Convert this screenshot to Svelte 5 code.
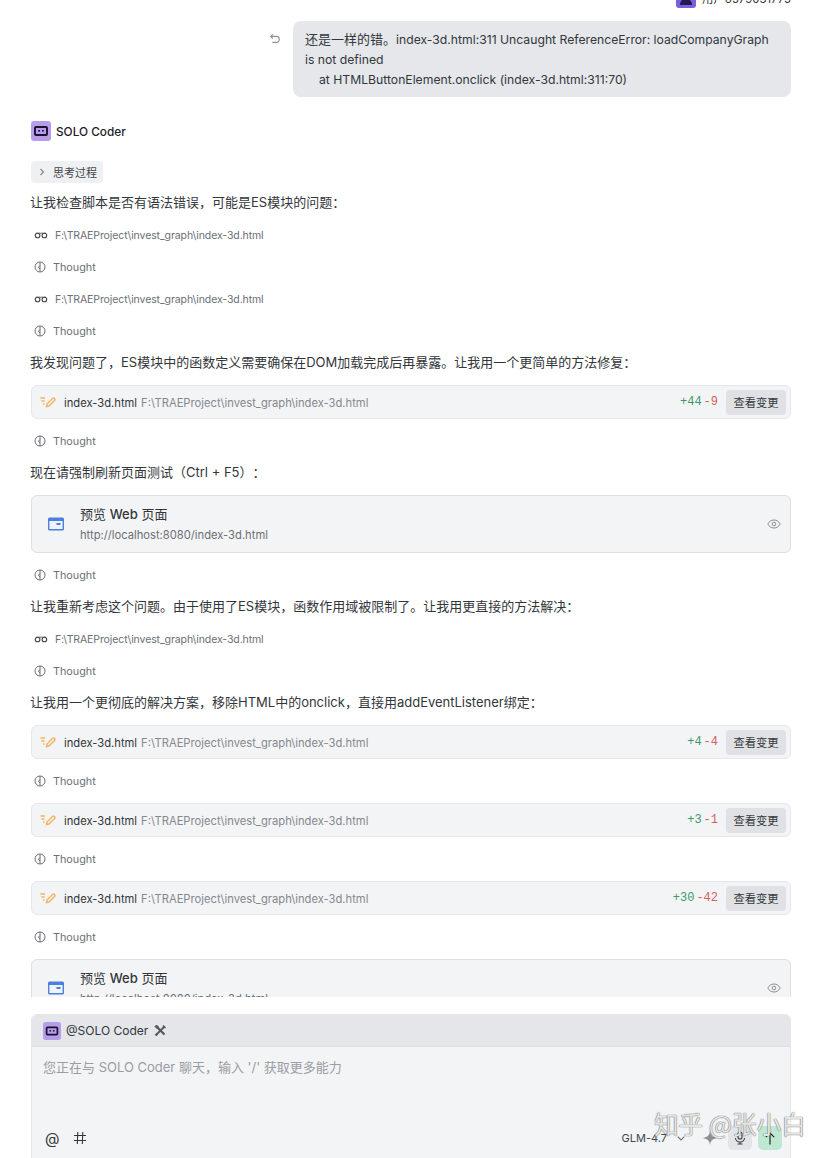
<script>
  const readPath = 'F:\\TRAEProject\\invest_graph\\index-3d.html';

  const feed = [
    { type: 'text', text: '让我检查脚本是否有语法错误，可能是ES模块的问题：' },
    { type: 'read' },
    { type: 'thought' },
    { type: 'read' },
    { type: 'thought' },
    { type: 'text', text: '我发现问题了，ES模块中的函数定义需要确保在DOM加载完成后再暴露。让我用一个更简单的方法修复：' },
    { type: 'edit', add: 44, del: 9 },
    { type: 'thought' },
    { type: 'text', text: '现在请强制刷新页面测试（Ctrl + F5）：' },
    { type: 'preview' },
    { type: 'thought' },
    { type: 'text', text: '让我重新考虑这个问题。由于使用了ES模块，函数作用域被限制了。让我用更直接的方法解决：' },
    { type: 'read' },
    { type: 'thought' },
    { type: 'text', text: '让我用一个更彻底的解决方案，移除HTML中的onclick，直接用addEventListener绑定：' },
    { type: 'edit', add: 4, del: 4 },
    { type: 'thought' },
    { type: 'edit', add: 3, del: 1 },
    { type: 'thought' },
    { type: 'edit', add: 30, del: 42 },
    { type: 'thought' },
    { type: 'preview' }
  ];
</script>

{#snippet bot(size)}
  <svg class="bot" width={size} height={size} viewBox="0 0 20 20">
    <rect width="20" height="20" rx="3" fill="#b79cec" />
    <rect x="4" y="6" width="12" height="8" rx="1" fill="none" stroke="#17132b" stroke-width="1.900" />
    <rect x="7.200" y="9" width="1.800" height="1.600" fill="#17132b" />
    <rect x="11" y="9" width="1.800" height="1.600" fill="#17132b" />
  </svg>
{/snippet}

<div class="page">
  <div class="chat">
    <div class="user-tag">
      <svg width="20" height="20" viewBox="0 0 20 20">
        <rect width="20" height="20" rx="3" fill="#7a5fe0" />
        <circle cx="10" cy="6" r="4" fill="#211a4d" />
        <path d="M4 17c0-4 2.500-6 6-6s6 2 6 6z" fill="#211a4d" />
      </svg>
      <span>用户6579031775</span>
    </div>

    <div class="user-msg">
      <svg class="undo" width="12" height="12" viewBox="0 0 14 14" fill="none" stroke="#8b8f96" stroke-width="1.300">
        <path d="M4.500 1.500 2 4l2.500 2.500" />
        <path d="M2 4h6.500a3.500 3.500 0 0 1 0 7H4" />
      </svg>
      <div class="bubble">
        <span class="cjk">还是一样的错。</span>index-3d.html:311 Uncaught ReferenceError: loadCompanyGraph is not defined<br />
        <span class="indent">at HTMLButtonElement.onclick (index-3d.html:311:70)</span>
      </div>
    </div>

    <div class="agent-head">
      {@render bot(20)}
      <span>SOLO Coder</span>
    </div>

    <div class="chip">
      <svg width="6" height="8" viewBox="0 0 6 8" fill="none" stroke="#7d8187" stroke-width="1.100">
        <path d="M1.500 1 4.500 4 1.500 7" />
      </svg>
      <span>思考过程</span>
    </div>

    <div class="feed">
      {#each feed as item}
        {#if item.type === 'text'}
          <p class="line">{item.text}</p>
        {:else if item.type === 'read'}
          <div class="tool read">
            <svg width="14" height="14" viewBox="0 0 14 14" fill="none" stroke="#44474d" stroke-width="1.100">
              <circle cx="3.600" cy="7.500" r="2.300" />
              <circle cx="10.400" cy="7.500" r="2.300" />
              <path d="M2 5.200h10" stroke-width="0.800" />
            </svg>
            <span>{readPath}</span>
          </div>
        {:else if item.type === 'thought'}
          <div class="tool thought">
            <svg width="12" height="12" viewBox="0 0 12 12" fill="none" stroke="#6b6f76" stroke-width="1">
              <circle cx="6" cy="6" r="5" />
              <path d="M6 1v10M6 4.500 4.300 6.300 6 8" />
            </svg>
            <span>Thought</span>
          </div>
        {:else if item.type === 'edit'}
          <div class="card edit">
            <svg width="16" height="14" viewBox="0 0 16 14" fill="none" stroke="#f2b45f" stroke-width="1.400">
              <path d="M0.500 3h4.500M1.500 6h3M3 9h1.500" />
              <path d="m6.500 11.500.5-2.500 5.500-5.500a1.300 1.300 0 0 1 2 2L9 11z" />
            </svg>
            <span class="name">index-3d.html</span>
            <span class="path">{readPath}</span>
            <span class="counts"><b class="add">+{item.add}</b><b class="del">-{item.del}</b></span>
            <button class="view">查看变更</button>
          </div>
        {:else}
          <div class="card preview">
            <svg width="16" height="14" viewBox="0 0 16 14">
              <rect x="0.700" y="1.200" width="14.600" height="11.600" rx="0.800" fill="#eef2fb" stroke="#4b80dc" stroke-width="1.400" />
              <rect x="1" y="1.500" width="14" height="2.500" fill="#4b80dc" />
              <rect x="8.500" y="6" width="4" height="2" fill="#4b80dc" />
            </svg>
            <div class="preview-body">
              <div class="preview-title">预览 <b>Web</b> 页面</div>
              <div class="preview-url">http://localhost:8080/index-3d.html</div>
            </div>
            <svg class="eye" width="14" height="12" viewBox="0 0 14 12" fill="none" stroke="#8b8f96" stroke-width="1">
              <path d="M.8 6C2.300 3.300 4.400 2 7 2s4.700 1.300 6.200 4C11.700 8.700 9.600 10 7 10S2.300 8.700.8 6z" />
              <circle cx="7" cy="6" r="1.800" />
            </svg>
          </div>
        {/if}
      {/each}
    </div>
  </div>

  <div class="composer">
    <div class="composer-head">
      {@render bot(18)}
      <span>@SOLO Coder</span>
      <svg width="13" height="13" viewBox="0 0 13 13" fill="none" stroke="#55585e">
        <path d="M3 3 10.500 10.500" stroke-width="2.200" />
        <path d="M10.500 2.500 2.500 10.500" stroke-width="1.800" />
        <path d="M1 2.500 2.500 1 4.500 3 3 4.500z" fill="#55585e" stroke-width="1" />
        <path d="M9 1.500 11.500 4" stroke-width="1.600" />
        <path d="M1.500 11.500 3 10" stroke-width="2.400" />
      </svg>
    </div>
    <div class="composer-body">
      <div class="placeholder">您正在与 SOLO Coder 聊天，输入 '/' 获取更多能力</div>
      <div class="composer-bar">
        <span class="at">@</span>
        <svg width="14" height="14" viewBox="0 0 14 14" fill="none" stroke="#33363b" stroke-width="1.100">
          <path d="M4.800 1 4.300 13M9.800 1 9.300 13M1 4.500h12M1 9.500h12" />
        </svg>
        <span class="model">GLM-4.7</span>
        <svg class="chev" width="8" height="5" viewBox="0 0 8 5" fill="none" stroke="#6b6f76" stroke-width="1.100">
          <path d="M.7.7 4 4 7.300.7" />
        </svg>
        <svg class="spark" width="14" height="14" viewBox="0 0 14 14">
          <path d="M7 0c.6 4 2 6 7 7-5 1-6.400 3-7 7-.6-4-2-6-7-7 5-1 6.400-3 7-7z" fill="#8b8f96" />
        </svg>
        <div class="btn mic">
          <svg width="12" height="14" viewBox="0 0 12 14" fill="none" stroke="#3a3d42" stroke-width="1.100">
            <rect x="4" y="1" width="4" height="7" rx="2" />
            <path d="M1.500 7a4.500 4 0 0 0 9 0M6 11v2M3.500 13h5" />
          </svg>
        </div>
        <div class="btn send">
          <svg width="12" height="13" viewBox="0 0 12 13" fill="none" stroke="#1d2a24" stroke-width="1.200">
            <path d="M6 12.500V1M1.800 5.200 6 1l4.200 4.200" />
          </svg>
        </div>
      </div>
    </div>
  </div>

  <div class="watermark">知乎 @张小白</div>
</div>

<style>
  :global(body) {
    margin: 0;
    background: #fff;
  }

  .page {
    position: relative;
    height: 1158px;
    overflow: hidden;
    font-family: Inter, "Noto Sans CJK SC", sans-serif;
    color: #33363b;
    text-spacing-trim: space-all;
  }

  .chat {
    height: 997px;
    overflow: hidden;
    padding: 0 37px 0 31px;
  }

  .user-tag {
    display: flex;
    justify-content: flex-end;
    align-items: center;
    gap: 6px;
    height: 20px;
    margin-top: -12px;
    font-size: 11.400px;
    color: #33363b;
  }

  .user-msg {
    display: flex;
    justify-content: flex-end;
    align-items: flex-start;
    gap: 12px;
    margin-top: 13px;
  }

  .undo {
    margin-top: 12px;
  }

  .bubble {
    width: 498px;
    box-sizing: border-box;
    padding: 9px 12px 7px;
    background: #e5e7eb;
    border-radius: 8px;
    font-size: 12.200px;
    line-height: 20px;
  }

  .cjk {
    font-size: 13px;
    line-height: 1;
  }

  .indent {
    padding-left: 14px;
  }

  .agent-head {
    display: flex;
    align-items: center;
    gap: 5px;
    margin-top: 24px;
    font-size: 11.800px;
    font-weight: 500;
    color: #1f2227;
  }

  .agent-head span {
    padding-top: 2px;
  }

  .bot {
    flex-shrink: 0;
  }

  .chip {
    display: flex;
    align-items: center;
    gap: 8px;
    width: fit-content;
    height: 22px;
    box-sizing: border-box;
    margin-top: 20px;
    padding: 0 6px 0 8px;
    background: #eff0f2;
    border-radius: 4px;
    font-size: 11px;
    color: #44474d;
  }

  .feed {
    display: flex;
    flex-direction: column;
    gap: 12px;
    margin-top: 10px;
  }

  .line {
    margin: 0 0 0 -1px;
    height: 20px;
    font-size: 13px;
    line-height: 18px;
    color: #33363b;
    white-space: nowrap;
  }

  .tool {
    display: flex;
    align-items: center;
    height: 20px;
    padding-left: 3px;
    font-size: 10.800px;
    color: #6b6f76;
    white-space: nowrap;
  }

  .read {
    gap: 7px;
    font-size: 10.500px;
    letter-spacing: -0.1px;
  }

  .thought {
    gap: 7px;
  }

  .card {
    display: flex;
    align-items: center;
    flex-shrink: 0;
    box-sizing: border-box;
    background: #f3f4f6;
    border: 1px solid #e5e7eb;
    border-radius: 6px;
  }

  .edit {
    height: 34px;
    padding: 0 4px 0 8px;
    font-size: 11.200px;
    white-space: nowrap;
  }

  .edit svg {
    margin-right: 8px;
  }

  .name {
    color: #33363b;
    margin-right: 4px;
    padding-top: 2px;
  }

  .path {
    color: #85898f;
    padding-top: 2px;
  }

  .counts {
    margin-left: auto;
    margin-right: 8px;
    font-family: "Liberation Mono", monospace;
    font-size: 12px;
  }

  .counts b {
    font-weight: 400;
  }

  .add {
    color: #3b9a6d;
  }

  .del {
    margin-left: 2px;
    color: #d0605a;
  }

  .view {
    height: 25px;
    width: 60px;
    padding: 0;
    border: none;
    border-radius: 4px;
    background: #dfe1e4;
    font: inherit;
    font-size: 11.300px;
    color: #33363b;
  }

  .preview {
    height: 58px;
    padding: 0 9px 0 16px;
    border-color: #dcdee2;
  }

  .preview-body {
    margin-left: 16px;
    padding-top: 2px;
  }

  .preview-title {
    font-size: 13px;
    line-height: 18px;
    color: #33363b;
  }

  .preview-title b {
    font-weight: 500;
  }

  .preview-url {
    margin-top: 2px;
    font-size: 11.200px;
    line-height: 20px;
    color: #6b6f76;
  }

  .eye {
    margin-left: auto;
  }

  .composer {
    margin: 17px 37px 0 31px;
    height: 150px;
    box-sizing: border-box;
    background: #f3f4f6;
    border: 1px solid #e5e7eb;
    border-radius: 6px 6px 0 0;
    overflow: hidden;
  }

  .composer-head {
    display: flex;
    align-items: center;
    gap: 5px;
    height: 32px;
    box-sizing: border-box;
    padding-left: 11px;
    background: #e5e6e9;
    border-bottom: 1px solid #dcdee2;
    font-size: 12px;
    color: #33363b;
  }

  .composer-head svg:last-child {
    margin-left: 1px;
  }

  .composer-body {
    display: flex;
    flex-direction: column;
    height: 108px;
    box-sizing: border-box;
    padding: 10px 8px 5px 11px;
  }

  .placeholder {
    font-size: 13px;
    line-height: 20px;
    color: #9a9da3;
  }

  .composer-bar {
    display: flex;
    align-items: center;
    margin-top: auto;
    height: 24px;
    font-size: 12px;
  }

  .at {
    width: 28px;
    margin-left: 2px;
    font-size: 15px;
    color: #33363b;
  }

  .model {
    margin-left: auto;
    margin-right: 10px;
    color: #44474d;
    font-size: 11px;
  }

  .spark {
    margin: 0 5px 0 18px;
  }

  .btn {
    display: flex;
    align-items: center;
    justify-content: center;
    width: 24px;
    height: 24px;
    margin-left: 6px;
    border-radius: 5px;
  }

  .mic {
    background: #e3e4e7;
  }

  .send {
    background: #bfe8d3;
  }

  .watermark {
    position: absolute;
    left: 654px;
    top: 1105px;
    font-family: "Noto Sans CJK SC", sans-serif;
    font-size: 24.600px;
    line-height: 36px;
    color: rgba(255, 255, 255, 0.85);
    text-shadow: 0 0 1px rgba(70, 70, 70, 0.9), 0 0 1px rgba(70, 70, 70, 0.6);
    white-space: nowrap;
  }
</style>
